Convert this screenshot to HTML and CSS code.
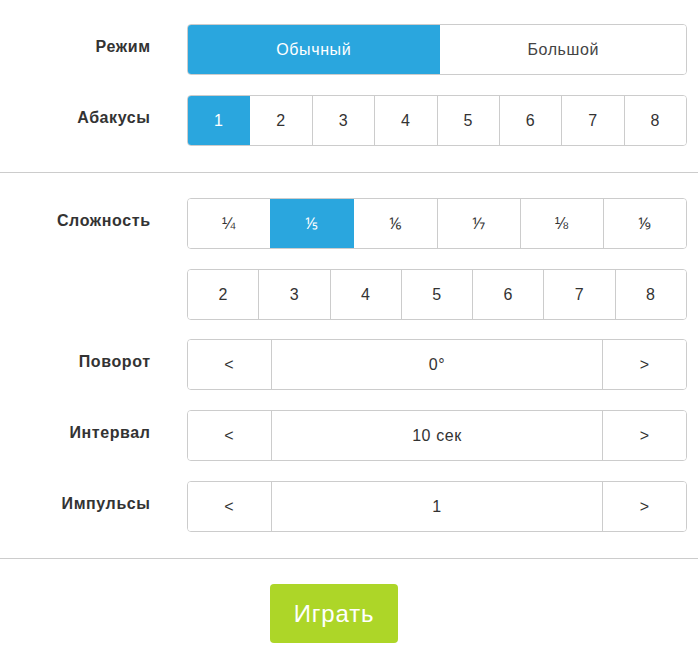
FILE: index.html
```html
<!DOCTYPE html>
<html lang="ru">
<head>
<meta charset="utf-8">
<title>Настройки</title>
<link rel="stylesheet" href="styles.css">
</head>
<body>
<div class="page">
  <section class="section">
    <div class="form-row">
      <div class="label">Режим</div>
      <div class="group group-mode">
        <button class="btn active mode-a">Обычный</button>
        <button class="btn mode-b">Большой</button>
      </div>
    </div>
    <div class="form-row">
      <div class="label">Абакусы</div>
      <div class="group">
        <button class="btn active">1</button>
        <button class="btn">2</button>
        <button class="btn">3</button>
        <button class="btn">4</button>
        <button class="btn">5</button>
        <button class="btn">6</button>
        <button class="btn">7</button>
        <button class="btn">8</button>
      </div>
    </div>
  </section>
  <hr class="divider">
  <section class="section">
    <div class="form-row">
      <div class="label">Сложность</div>
      <div class="group">
        <button class="btn frac">¼</button>
        <button class="btn frac active">⅕</button>
        <button class="btn frac">⅙</button>
        <button class="btn frac">⅐</button>
        <button class="btn frac">⅛</button>
        <button class="btn frac">⅑</button>
      </div>
    </div>
    <div class="form-row row-tight">
      <div class="label"></div>
      <div class="group">
        <button class="btn">2</button>
        <button class="btn">3</button>
        <button class="btn">4</button>
        <button class="btn">5</button>
        <button class="btn">6</button>
        <button class="btn">7</button>
        <button class="btn">8</button>
      </div>
    </div>
    <div class="form-row">
      <div class="label">Поворот</div>
      <div class="group stepper">
        <button class="btn step">&lt;</button>
        <div class="btn value">0°</div>
        <button class="btn step">&gt;</button>
      </div>
    </div>
    <div class="form-row">
      <div class="label">Интервал</div>
      <div class="group stepper">
        <button class="btn step">&lt;</button>
        <div class="btn value">10 сек</div>
        <button class="btn step">&gt;</button>
      </div>
    </div>
    <div class="form-row">
      <div class="label">Импульсы</div>
      <div class="group stepper">
        <button class="btn step">&lt;</button>
        <div class="btn value">1</div>
        <button class="btn step">&gt;</button>
      </div>
    </div>
  </section>
  <hr class="divider">
  <div class="actions">
    <button class="play">Играть</button>
  </div>
</div>
</body>
</html>
```

FILE: styles.css
```css
* { box-sizing: border-box; }

html, body {
  margin: 0;
  padding: 0;
  background: #fff;
}

body {
  font-family: "Liberation Sans", Arial, sans-serif;
  font-size: 16px;
  letter-spacing: 0.6px;
  color: #333;
}

.page {
  width: 698px;
  padding-top: 24px;
}

.section {
  display: flex;
  flex-direction: column;
  gap: 20px;
}

.form-row {
  display: grid;
  grid-template-columns: 150px 500px;
  column-gap: 37px;
}

.row-tight { margin-bottom: -1px; }

.label {
  font-weight: bold;
  text-align: right;
  padding-top: 12px;
  line-height: 22px;
  color: #333;
  margin-right: -0.6px;
}

.group {
  display: flex;
  height: 51px;
  border: 1px solid #ccc;
  border-radius: 4px;
  overflow: hidden;
  background: #fff;
}

.btn {
  flex: 1 1 0;
  min-width: 0;
  margin: 0;
  padding: 0;
  border: 0;
  border-left: 1px solid #ccc;
  background: #fff;
  font-family: inherit;
  font-size: 16px;
  letter-spacing: inherit;
  color: #333;
  display: flex;
  align-items: center;
  justify-content: center;
  line-height: 22px;
}

.btn:first-child { border-left: 0; }

.btn.active {
  background: #2aa6de;
  color: #fff;
  border-left-color: #2aa6de;
}

.btn.active + .btn { border-left-color: #2aa6de; }

.mode-a { flex: 253 1 0; }
.mode-b { flex: 247 1 0; color: #444; }

.frac { font-size: 16px; }

.stepper .step { flex: 1 1 0; }
.stepper .value { flex: 4 1 0; }

.divider {
  margin: 26px 0 25px;
  border: 0;
  border-top: 1px solid #ccc;
  height: 0;
}

.actions {
  padding-left: 270px;
}

.play {
  width: 128px;
  height: 59px;
  border: 0;
  border-radius: 4px;
  background: #add628;
  color: #fff;
  font-family: inherit;
  font-size: 24px;
  letter-spacing: 0.8px;
  padding: 0;
}
```
